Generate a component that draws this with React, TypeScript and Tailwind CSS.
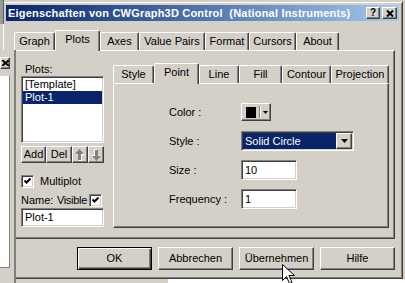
import React from 'react';

const raised =
  'border border-t-white border-l-white border-r-[#404040] border-b-[#404040] shadow-[inset_-1px_-1px_0_#808080]';
const sunken =
  'border border-t-[#808080] border-l-[#808080] border-r-white border-b-white shadow-[inset_1px_1px_0_#404040,inset_-1px_-1px_0_#d4d0c8]';
const tabBase =
  'flex items-center justify-center whitespace-nowrap border-t border-l border-r border-t-white border-l-white border-r-[#404040] shadow-[inset_-1px_0_0_#808080] rounded-t-[2px]';

type TabDef = { label: string; w: string };

const mainTabs: TabDef[] = [
  { label: 'Graph', w: 'w-[41px]' },
  { label: 'Plots', w: 'w-[45px]' },
  { label: 'Axes', w: 'w-[39px]' },
  { label: 'Value Pairs', w: 'w-[66px]' },
  { label: 'Format', w: 'w-[44px]' },
  { label: 'Cursors', w: 'w-[47px]' },
  { label: 'About', w: 'w-[43px]' },
];

const plotTabs: TabDef[] = [
  { label: 'Style', w: 'w-[41px]' },
  { label: 'Point', w: 'w-[45px]' },
  { label: 'Line', w: 'w-[40px]' },
  { label: 'Fill', w: 'w-[43px]' },
  { label: 'Contour', w: 'w-[49px]' },
  { label: 'Projection', w: 'w-[58px]' },
];

function TabRow({ tabs, active }: { tabs: TabDef[]; active: string }) {
  return (
    <div className="flex items-end h-[20px]">
      {tabs.map((t) =>
        t.label === active ? (
          <div
            key={t.label}
            className={`${tabBase} ${t.w} h-[21px] -mb-px pb-[4px] relative z-10 bg-[#d4d0c8]`}
          >
            {t.label}
          </div>
        ) : (
          <div key={t.label} className={`${tabBase} ${t.w} h-[18px]`}>
            {t.label}
          </div>
        )
      )}
    </div>
  );
}

function Check() {
  return (
    <div className={`w-[13px] h-[13px] shrink-0 bg-white ${sunken} flex items-center justify-center`}>
      <svg width="7" height="7" viewBox="0 0 7 7">
        <path d="M0.5 2.5 L2.5 4.5 L6.5 0.5" fill="none" stroke="black" strokeWidth="2" />
      </svg>
    </div>
  );
}

// greyed-out (disabled) move up / move down arrows
function GrayArrow({ down }: { down?: boolean }) {
  const d = 'M4.5 0 L9 5 H6 V11 H3 V5 H0 Z';
  return (
    <svg width="10" height="12" viewBox="0 0 10 12" className={down ? 'rotate-180' : ''}>
      <path d={d} transform="translate(1 1)" fill="#ffffff" />
      <path d={d} fill="#808080" />
    </svg>
  );
}

function DownTri() {
  return (
    <svg width="7" height="4" viewBox="0 0 7 4">
      <polygon points="0,0 7,0 3.5,4" fill="black" />
    </svg>
  );
}

function FormRow({ label, gap, children }: { label: string; gap: string; children: React.ReactNode }) {
  return (
    <div className={`flex items-center ${gap}`}>
      <div className="w-[72px]">{label}</div>
      {children}
    </div>
  );
}

export default function App() {
  return (
    <div className="relative w-[405px] h-[283px] overflow-hidden bg-[#d4d0c8] pt-[1px] pl-[2px] font-['Liberation_Sans',Arial,sans-serif] text-[11px] leading-[13px] text-black">
      {/* dialog */}
      <div className="w-[401px] h-[278px] flex flex-col p-[3px] border border-t-[#d4d0c8] border-l-[#d4d0c8] border-r-[#404040] border-b-[#404040] shadow-[inset_1px_1px_0_#fff,inset_-1px_-1px_0_#808080]">
        {/* title bar */}
        <div className="h-[16px] flex items-center pl-[2px] pr-[2px] bg-linear-to-r from-[#0a246a] to-[#a6caf0]">
          <span className="text-white font-bold tracking-[0.2px] whitespace-pre">
            Eigenschaften von CWGraph3D Control  (National Instruments)
          </span>
          <div className="ml-auto flex gap-[2px]">
            <div className={`w-[14px] h-[12px] bg-[#d4d0c8] ${raised} flex items-center justify-center font-bold text-[10px] leading-[10px]`}>
              ?
            </div>
            <div className={`w-[15px] h-[12px] bg-[#d4d0c8] ${raised} flex items-center justify-center`}>
              <svg width="8" height="7" viewBox="0 0 8 7">
                <path d="M1 0.5 L7 6.5 M7 0.5 L1 6.5" stroke="black" strokeWidth="2" />
              </svg>
            </div>
          </div>
        </div>

        {/* main tabs */}
        <div className="mt-[9px] ml-[8px]">
          <TabRow tabs={mainTabs} active="Plots" />
        </div>
        <div className={`ml-[8px] w-[381px] h-[189px] ${raised} pl-[6px] pt-[12px] flex`}>
          {/* left column */}
          <div className="w-[83px] flex flex-col">
            <div className="h-[13px] pl-[4px]">Plots:</div>
            <div className={`h-[67px] bg-white ${sunken} p-px`}>
              <div className="h-[13px] pl-[2px]">[Template]</div>
              <div className="h-[13px] pl-[2px] bg-[#0a246a] text-white">Plot-1</div>
            </div>
            <div className="mt-[3px] h-[17px] flex">
              <div className={`w-[25px] ${raised} flex items-center justify-center`}>Add</div>
              <div className={`w-[26px] ${raised} flex items-center justify-center`}>Del</div>
              <div className={`w-[16px] ${raised} flex items-center justify-center`}>
                <GrayArrow />
              </div>
              <div className={`w-[16px] ${raised} flex items-center justify-center`}>
                <GrayArrow down />
              </div>
            </div>
            <div className="mt-[12px] h-[13px] flex items-center">
              <Check />
              <span className="ml-[6px]">Multiplot</span>
            </div>
            <div className="mt-[6px] h-[13px] flex items-center pr-[2px]">
              <span>Name:</span>
              <span className="ml-auto mr-[2px] tracking-[-0.3px]">Visible</span>
              <Check />
            </div>
            <div className={`mt-px h-[19px] bg-white ${sunken} pl-[3px] flex items-center`}>Plot-1</div>
          </div>

          {/* plot tabs */}
          <div className="ml-[9px] w-[276px]">
            <TabRow tabs={plotTabs} active="Point" />
            <div className={`h-[145px] ${raised} pl-[55px] pt-[19px] flex flex-col`}>
              <FormRow label="Color :" gap="">
                <div className={`w-[30px] h-[18px] ${raised} flex items-center pl-[4px]`}>
                  <div className="w-[10px] h-[11px] bg-black" />
                  <div className="ml-[3px] w-[2px] h-[12px] border-l border-l-[#808080] border-r border-r-white" />
                  <div className="ml-[2px] flex">
                    <svg width="5" height="3" viewBox="0 0 5 3">
                      <polygon points="0,0 5,0 2.5,3" fill="black" />
                    </svg>
                  </div>
                </div>
              </FormRow>
              <FormRow label="Style :" gap="mt-[10px]">
                <div className={`w-[113px] h-[20px] bg-white ${sunken} p-px flex`}>
                  <div className="flex-1 bg-[#0a246a] text-white pl-[2px] flex items-center">Solid Circle</div>
                  <div className={`w-[16px] bg-[#d4d0c8] ${raised} flex items-center justify-center`}>
                    <DownTri />
                  </div>
                </div>
              </FormRow>
              <FormRow label="Size :" gap="mt-[9px]">
                <div className={`w-[56px] h-[20px] bg-white ${sunken} pl-[3px] flex items-center`}>10</div>
              </FormRow>
              <FormRow label="Frequency :" gap="mt-[9px]">
                <div className={`w-[56px] h-[20px] bg-white ${sunken} pl-[3px] flex items-center`}>1</div>
              </FormRow>
            </div>
          </div>
        </div>

        {/* dialog buttons */}
        <div className="mt-[8px] pl-[71px] flex gap-[6px]">
          <div className="w-[75px] h-[23px] border border-black shadow-[inset_1px_1px_0_#fff,inset_-1px_-1px_0_#404040,inset_-2px_-2px_0_#808080] flex items-center justify-center pb-px">
            OK
          </div>
          <div className={`w-[75px] h-[23px] ${raised} flex items-center justify-center pb-px`}>Abbrechen</div>
          <div className={`w-[75px] h-[23px] ${raised} flex items-center justify-center pb-px`}>Übernehmen</div>
          <div className={`w-[75px] h-[23px] ${raised} flex items-center justify-center pb-px`}>Hilfe</div>
        </div>
      </div>

      {/* background window bits */}
      <div className="absolute left-0 top-0 w-[4px] h-[24px] bg-[#9a9a9a] border-r border-r-[#606060]" />
      <div className="absolute left-[168px] right-0 bottom-0 h-[4px] bg-white" />

      {/* window overlapping on the left */}
      <div className="absolute left-0 top-[50px] w-[16px] h-[233px] bg-[#d4d0c8] border-r-2 border-r-[#808080]">
        <div className={`absolute left-0 top-[7px] w-[10px] h-[12px] ${raised} flex items-center justify-center`}>
          <svg width="7" height="6" viewBox="0 0 7 6">
            <path d="M0 0 L7 6 M7 0 L0 6" stroke="black" strokeWidth="2" />
          </svg>
        </div>
        <div className="absolute left-0 top-[26px] w-[10px] h-[192px] bg-white border-r border-b border-r-[#808080] border-b-[#808080]" />
      </div>

      {/* mouse pointer */}
      <svg width="13" height="20" viewBox="0 0 13 20" className="absolute left-[282px] top-[264px]">
        <path d="M0.5 0.5 V16.5 L4.5 12.5 L7.5 19.5 L10 18.5 L7 11.5 H12.5 Z" fill="white" stroke="black" />
      </svg>
    </div>
  );
}
